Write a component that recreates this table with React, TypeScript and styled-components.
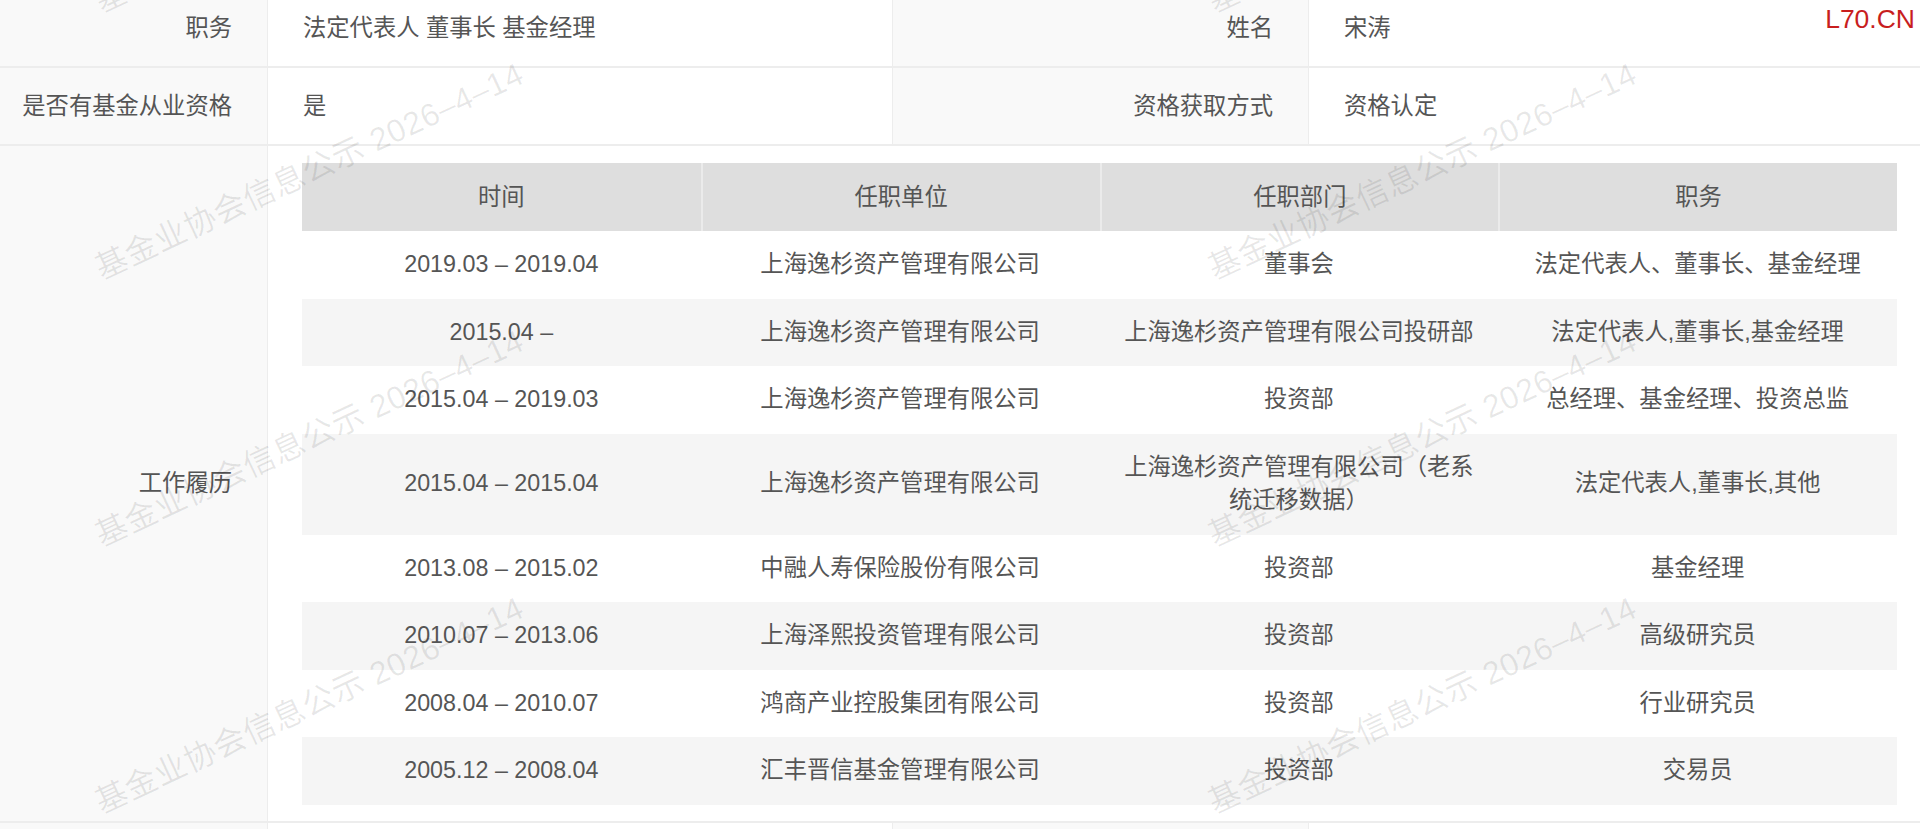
import React from 'react';
import styled, { createGlobalStyle } from 'styled-components';

const palette = {
  text: '#555555',
  labelBg: '#f9f9f9',
  border: '#ededed',
  headBg: '#dedede',
  headSep: '#ebebeb',
  stripe: '#f5f5f5',
  mark: 'rgba(0, 0, 0, 0.09)',
  brand: '#c81e1e',
};

const GlobalStyle = createGlobalStyle`
  *, *::before, *::after { box-sizing: border-box; }
  html, body { margin: 0; padding: 0; background: #fff; }
  body {
    overflow: hidden;
    font-family: "Liberation Sans", "Noto Sans CJK SC", sans-serif;
    color: ${palette.text};
  }
`;

interface HistoryItem {
  period: string;
  company: string;
  dept: string;
  title: string;
}

const history: HistoryItem[] = [
  { period: '2019.03 – 2019.04', company: '上海逸杉资产管理有限公司', dept: '董事会', title: '法定代表人、董事长、基金经理' },
  { period: '2015.04 –', company: '上海逸杉资产管理有限公司', dept: '上海逸杉资产管理有限公司投研部', title: '法定代表人,董事长,基金经理' },
  { period: '2015.04 – 2019.03', company: '上海逸杉资产管理有限公司', dept: '投资部', title: '总经理、基金经理、投资总监' },
  { period: '2015.04 – 2015.04', company: '上海逸杉资产管理有限公司', dept: '上海逸杉资产管理有限公司（老系统迁移数据）', title: '法定代表人,董事长,其他' },
  { period: '2013.08 – 2015.02', company: '中融人寿保险股份有限公司', dept: '投资部', title: '基金经理' },
  { period: '2010.07 – 2013.06', company: '上海泽熙投资管理有限公司', dept: '投资部', title: '高级研究员' },
  { period: '2008.04 – 2010.07', company: '鸿商产业控股集团有限公司', dept: '投资部', title: '行业研究员' },
  { period: '2005.12 – 2008.04', company: '汇丰晋信基金管理有限公司', dept: '投资部', title: '交易员' },
];

// watermark grid: left-middle anchor of each rotated line
const markColumns = [96.5, 1209.5];
const markRows = [0, 1, 2, 3].map((k) => 2.8 + 267 * k);

function App() {
  return (
    <Page>
      <GlobalStyle />
      <InfoTable>
        <InfoRow>
          <Label>职务</Label>
          <Value $divider>法定代表人 董事长 基金经理</Value>
          <Label>姓名</Label>
          <Value>宋涛</Value>
        </InfoRow>
        <InfoRow>
          <Label>是否有基金从业资格</Label>
          <Value $divider>是</Value>
          <Label>资格获取方式</Label>
          <Value>资格认定</Value>
        </InfoRow>
        <InfoRow>
          <Label>工作履历</Label>
          <HistoryWrap>
            <HistoryRow>
              <HeadCell>时间</HeadCell>
              <HeadCell>任职单位</HeadCell>
              <HeadCell>任职部门</HeadCell>
              <HeadCell>职务</HeadCell>
            </HistoryRow>
            {history.map((item, i) => (
              <HistoryRow key={i} $striped={i % 2 === 1}>
                <Cell>{item.period}</Cell>
                <Cell>{item.company}</Cell>
                <Cell>{item.dept}</Cell>
                <Cell>{item.title}</Cell>
              </HistoryRow>
            ))}
          </HistoryWrap>
        </InfoRow>
        <InfoRow>
          <Label />
          <Value $divider />
          <Label />
          <Value />
        </InfoRow>
      </InfoTable>

      <MarkLayer>
        {markColumns.map((x) =>
          markRows.map((y) => (
            <Mark key={`${x}-${y}`} style={{ left: x, top: y }}>
              基金业协会信息公示 2026–4–14
            </Mark>
          )),
        )}
      </MarkLayer>

      <Brand>L70.CN</Brand>
    </Page>
  );
}

const Page = styled.div`
  position: relative;
  height: 829px;
  overflow: hidden;
`;

const InfoTable = styled.div`
  margin-top: -10px;
  width: 100%;
`;

const InfoRow = styled.div`
  display: grid;
  grid-template-columns: 268px 625px 416px 1fr;
  min-height: 78px;
  border-bottom: 2px solid ${palette.border};
  font-size: 23.3px;
  line-height: 33px;
`;

const Label = styled.div`
  display: flex;
  align-items: center;
  justify-content: flex-end;
  padding: 0 35px;
  background: ${palette.labelBg};
  border-right: 1px solid ${palette.border};
  white-space: nowrap;
`;

const Value = styled.div<{ $divider?: boolean }>`
  display: flex;
  align-items: center;
  padding: 0 35px;
  border-right: ${(p) => (p.$divider ? `1px solid ${palette.border}` : 'none')};
`;

const HistoryWrap = styled.div`
  grid-column: span 3;
  padding: 17px 23px 16px 34px;
`;

const HistoryRow = styled.div<{ $striped?: boolean }>`
  display: grid;
  grid-template-columns: repeat(4, 1fr);
  background: ${(p) => (p.$striped ? palette.stripe : '#fff')};
`;

const HeadCell = styled.div`
  height: 68px;
  display: flex;
  align-items: center;
  justify-content: center;
  background: ${palette.headBg};

  & + & {
    border-left: 2px solid ${palette.headSep};
  }
`;

const Cell = styled.div`
  display: flex;
  align-items: center;
  justify-content: center;
  padding: 17px 16px;
  line-height: 33.5px;
  text-align: center;
`;

const MarkLayer = styled.div`
  position: absolute;
  inset: 0;
  pointer-events: none;
  overflow: hidden;
`;

const Mark = styled.span`
  position: absolute;
  height: 40px;
  margin-top: -20px;
  font-size: 32px;
  line-height: 40px;
  letter-spacing: 0.6px;
  white-space: nowrap;
  color: ${palette.mark};
  transform-origin: 0 50%;
  transform: rotate(-25deg);
`;

const Brand = styled.span`
  position: absolute;
  top: 6px;
  right: 5px;
  font-family: "Liberation Sans", Arial, sans-serif;
  font-size: 26.5px;
  line-height: 1;
  color: ${palette.brand};
`;

export default App;
